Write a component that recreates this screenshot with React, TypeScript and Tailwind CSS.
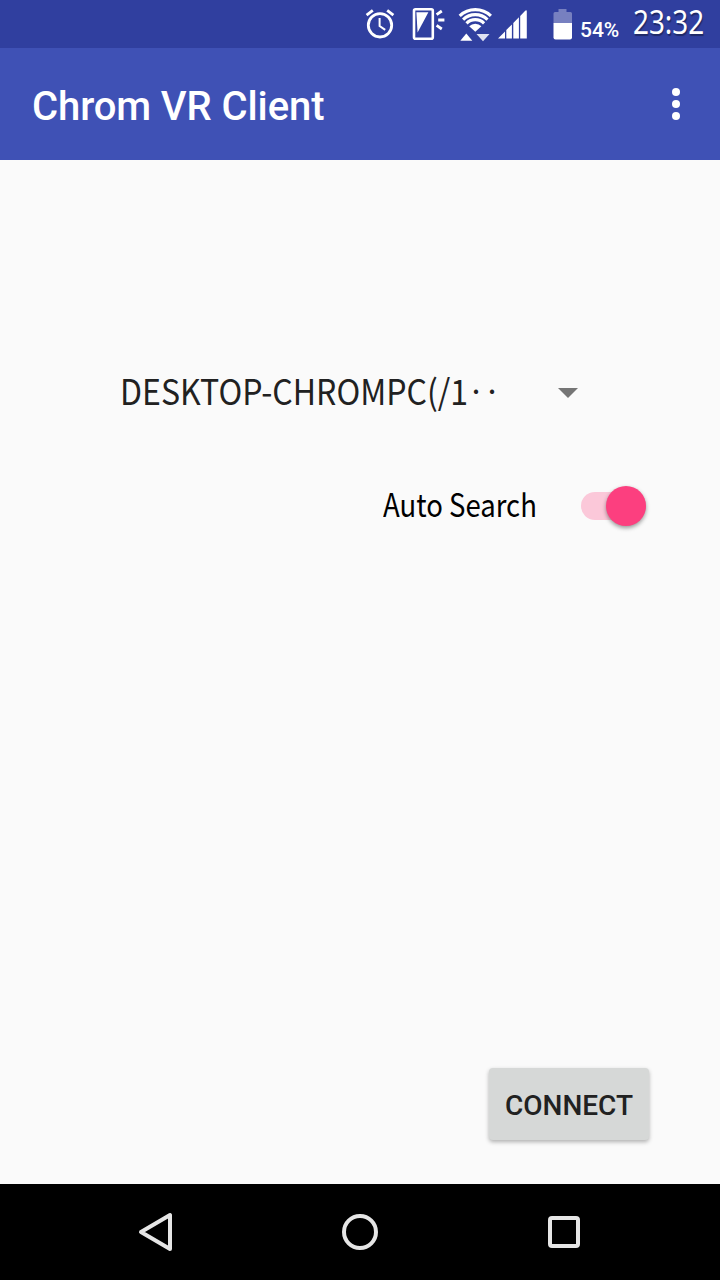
import { useState } from "react";

function AlarmIcon() {
  return (
    <svg className="h-12 w-8" viewBox="0 0 32 48" fill="none" stroke="#fff">
      <circle cx="16" cy="25.3" r="11.7" strokeWidth="2.8" />
      <path d="M15.6 18v8l5.6 3.8" strokeWidth="2" />
      <path d="M2.6 15.2l6.2-4.8M29.4 15.2l-6.2-4.8" strokeWidth="2.8" />
    </svg>
  );
}

function VibrateIcon() {
  return (
    <svg className="ml-4 h-12 w-9" viewBox="0 0 36 48" fill="none" stroke="#fff">
      <rect x="2" y="9.2" width="18.8" height="29.6" rx="1.5" strokeWidth="2.6" />
      <path d="M4.4 12.3h12L5.6 32.5z" fill="#fff" stroke="none" />
      <path d="M24.6 14.6l5.2-3.6M26.2 20h6.2M24.6 25.4l5.2 3.6" strokeWidth="2.8" />
    </svg>
  );
}

function WifiIcon() {
  return (
    <svg className="ml-2.5 h-12 w-9" viewBox="0 0 36 48" fill="none" stroke="#fff">
      <g strokeWidth="3.1">
        <path d="M1.7 15.9a22.5 22.5 0 0 1 31.2 0" />
        <path d="M5.1 19.6a17.4 17.4 0 0 1 24.4 0" />
        <path d="M8.5 23.3a12.4 12.4 0 0 1 17.6 0" />
      </g>
      <path d="M11.2 26.2a8.6 8.6 0 0 1 12.2 0L17.3 31.8z" fill="#fff" stroke="none" />
      <path d="M2.3 40.8L8.3 33.4l6 7.4z" fill="#fff" stroke="none" />
      <path d="M18.5 34h13l-6.5 7.2z" fill="#dfe1f2" stroke="none" />
    </svg>
  );
}

function SignalIcon() {
  return (
    <svg className="ml-1 h-12 w-8" viewBox="0 0 32 48" fill="#fff">
      <path d="M0 38.5L7 31.4v7.1zM8.3 30.1l5.6-5.7v14.1H8.3zM15.3 23l5.6-5.7v21.2h-5.6zM22.2 16l5-5.2q1.6-1.2 1.6.8v26.9h-6.6z" />
    </svg>
  );
}

function BatteryIcon() {
  return (
    <svg className="ml-[22px] h-12 w-6" viewBox="0 0 24 48">
      <path
        d="M6.5 9h8v3h4q1.5 0 1.5 1.5V23H1.5v-9.5q0-1.5 1.5-1.5h3.5z"
        fill="#7780c0"
      />
      <path d="M1.5 23H20v14.5q0 2-2 2H3.5q-2 0-2-2z" fill="#fff" />
    </svg>
  );
}

function StatusBar() {
  return (
    <header className="flex h-12 items-center bg-[#303f9f] pl-[364px] text-white">
      <AlarmIcon />
      <VibrateIcon />
      <WifiIcon />
      <SignalIcon />
      <BatteryIcon />
      <span className="ml-1 w-[53px] pt-[13px] font-['Roboto'] text-[21px] leading-none font-medium">
        54%
      </span>
      <span className="origin-left scale-x-[0.87] pb-1 font-['Noto_Sans',sans-serif] text-[32px] leading-[44px] whitespace-nowrap [text-shadow:1px_2px_1px_rgba(0,0,0,0.35)]">
        23:32
      </span>
    </header>
  );
}

function AppBar() {
  return (
    <div className="flex h-28 items-center justify-between bg-[#3f51b5] pr-10 pl-8">
      <h1 className="pt-1.5 font-['Roboto'] text-[40px] leading-none font-medium tracking-[-0.1px] text-white">
        Chrom VR Client
      </h1>
      <button aria-label="More options" className="flex flex-col gap-1">
        <span className="size-2 rounded-full bg-white" />
        <span className="size-2 rounded-full bg-white" />
        <span className="size-2 rounded-full bg-white" />
      </button>
    </div>
  );
}

function NavBar() {
  return (
    <nav className="flex h-24 items-center justify-between bg-black px-[136px]">
      <svg className="size-10" viewBox="0 0 40 40" fill="none" stroke="#e6e6e6">
        <path d="M5 20L34 3v34z" strokeWidth="4" strokeLinejoin="round" />
      </svg>
      <span className="mr-1 size-9 rounded-full border-4 border-[#e6e6e6]" />
      <span className="mr-1 size-8 rounded-[4px] border-4 border-[#e6e6e6]" />
    </nav>
  );
}

export default function App() {
  const [autoSearch, setAutoSearch] = useState(true);

  return (
    <div className="flex h-[1280px] w-[720px] flex-col overflow-hidden">
      <StatusBar />
      <AppBar />

      <main className="flex flex-1 flex-col bg-[#fafafa] pt-[196px] pr-[71px] pb-11">
        <div className="flex h-[72px] items-center pl-[120px]">
          <span className="w-[438px] origin-left scale-x-[0.915] pb-1.5 font-['Noto_Sans_CJK_JP',sans-serif] text-[35px] leading-none whitespace-nowrap text-[#212121]">
            DESKTOP-CHROMPC(/1‥
          </span>
          <svg className="mt-px h-[10px] w-5" viewBox="0 0 20 10" fill="#757575">
            <path d="M0 0h20L10 10z" />
          </svg>
        </div>

        <div className="mt-[42px] flex h-[72px] items-center pl-[383px]">
          <span className="w-[198px] origin-left scale-x-[0.86] pb-1.5 font-['Noto_Sans_CJK_JP',sans-serif] text-[32px] leading-none whitespace-nowrap text-black">
            Auto Search
          </span>
          <button
            role="switch"
            aria-checked={autoSearch}
            aria-label="Auto Search"
            onClick={() => setAutoSearch(!autoSearch)}
            className={`flex h-7 w-[65px] items-center rounded-full ${
              autoSearch ? "justify-end bg-[#fbc8d9]" : "justify-start bg-gray-300"
            }`}
          >
            <span className="size-10 rounded-full bg-[#fc3f7f] shadow-[0_2px_4px_rgba(0,0,0,0.4)]" />
          </button>
        </div>

        <button className="mt-auto h-[72px] w-40 self-end rounded-[4px] bg-[#d6d8d7] pt-[3px] font-['Roboto'] text-[28px] leading-none font-medium text-[#212121] shadow-[0_2px_4px_rgba(0,0,0,0.3)]">
          CONNECT
        </button>
      </main>

      <NavBar />
    </div>
  );
}
